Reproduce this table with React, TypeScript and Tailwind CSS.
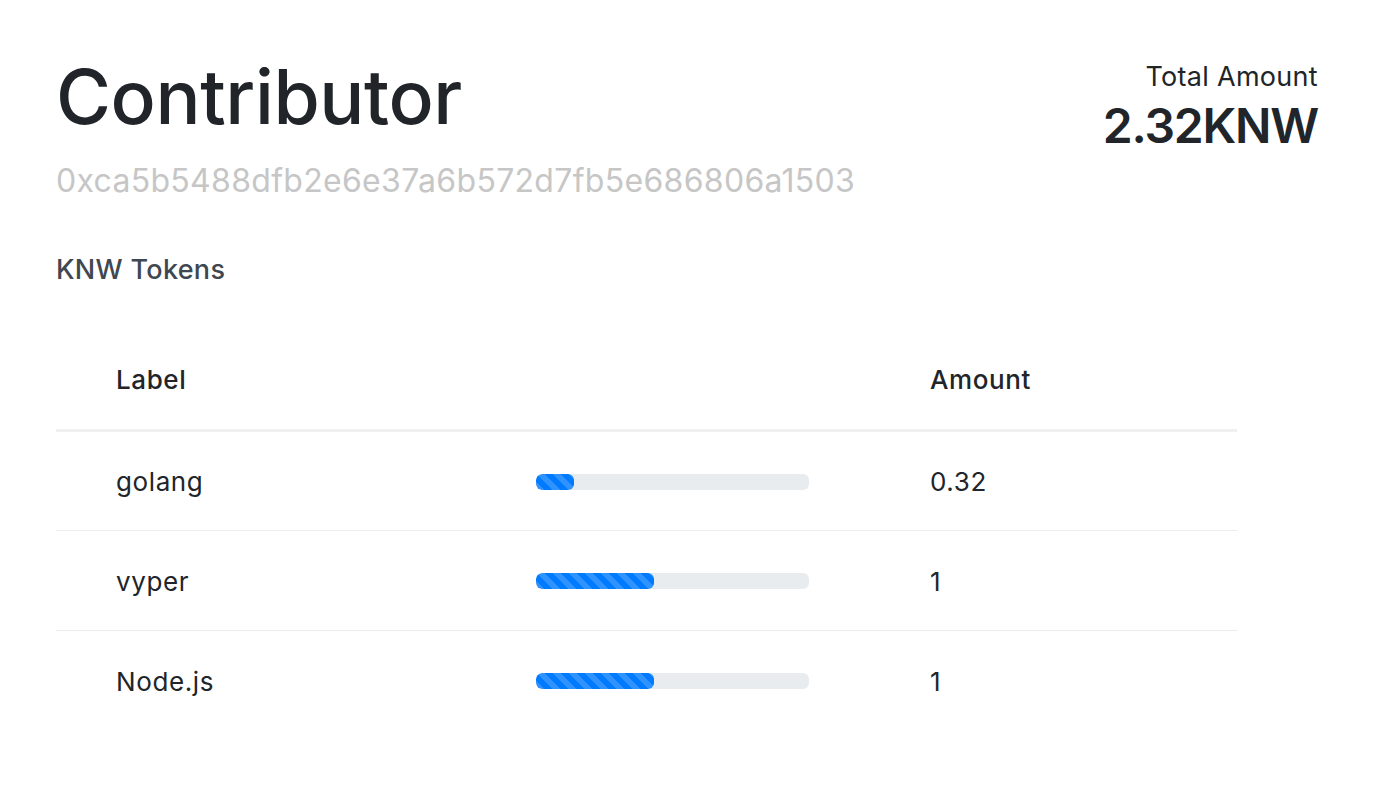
const TOKENS = [
  { label: "golang", amount: 0.32 },
  { label: "vyper", amount: 1 },
  { label: "Node.js", amount: 1 },
];

const TOTAL = 2.32;

function Progress({ value }: { value: number }) {
  return (
    <div className="h-4 w-[273px] overflow-hidden rounded-[6px] bg-[#e9ecef]">
      <div
        className="h-full rounded-[6px] bg-[#007bff] bg-[length:1rem_1rem] bg-[linear-gradient(45deg,rgba(255,255,255,.18)_25%,transparent_25%,transparent_50%,rgba(255,255,255,.18)_50%,rgba(255,255,255,.18)_75%,transparent_75%,transparent)]"
        style={{ width: `${(value / TOTAL) * 100}%` }}
      />
    </div>
  );
}

export default function App() {
  return (
    <div className="min-h-screen bg-white pl-[56px] pr-[70px] pt-[52px] font-['Inter',sans-serif] text-[#212529]">
      <div className="flex items-start justify-between">
        <div>
          <h1 className="text-[75px] font-medium leading-[90px] tracking-[-0.4px]">Contributor</h1>
          <p className="mt-[18px] text-[32px] leading-[42px] tracking-[0.3px] text-[#c6c6c6]">0xca5b5488dfb2e6e37a6b572d7fb5e686806a1503</p>
        </div>
        <div className="pt-[8px] text-right">
          <p className="text-[27px] leading-[34px] tracking-[0.3px]">Total Amount</p>
          <p className="mt-[4px] text-[48px] font-semibold leading-[56px] tracking-[-1.2px]">2.32KNW</p>
        </div>
      </div>

      <h2 className="mt-[49px] text-[27px] font-medium leading-[38px] tracking-[0.3px] text-[#3f4750]">KNW Tokens</h2>

      <table className="mt-[41px] w-[1181px] border-collapse text-[26px] tracking-[0.6px]">
        <thead>
          <tr className="border-b-[3px] border-[#f0f0f0]">
            <th className="h-[100px] w-[420px] pl-[60px] text-left font-medium">Label</th>
            <th className="w-[394px]"></th>
            <th className="pl-[60px] text-left font-medium">Amount</th>
          </tr>
        </thead>
        <tbody>
          {TOKENS.map((t, i) => (
            <tr key={t.label} className={i < TOKENS.length - 1 ? "border-b border-[#ececec]" : ""}>
              <td className="h-[100px] pl-[60px] pt-[2px]">{t.label}</td>
              <td className="pl-[60px] pt-[2px]">
                <Progress value={t.amount} />
              </td>
              <td className="pl-[60px] pt-[2px]">{t.amount}</td>
            </tr>
          ))}
        </tbody>
      </table>
    </div>
  );
}
